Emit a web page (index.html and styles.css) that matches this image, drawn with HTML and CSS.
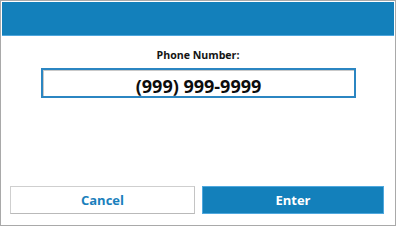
FILE: index.html
```html
<!DOCTYPE html>
<html>
<head>
<meta charset="utf-8">
<link rel="stylesheet" href="styles.css">
</head>
<body>
<div class="frame">
  <div class="header"></div>
  <div class="content">
    <div class="label">Phone Number:</div>
    <div class="field"><span class="value">(999) 999-9999</span></div>
  </div>
  <div class="actions">
    <button class="btn cancel">Cancel</button>
    <button class="btn enter">Enter</button>
  </div>
</div>
</body>
</html>
```

FILE: styles.css
```css
html, body {
  margin: 0;
  padding: 0;
  background: #ffffff;
}
body {
  width: 397px;
  height: 227px;
  font-family: "Open Sans", "Liberation Sans", sans-serif;
}
.frame {
  box-sizing: border-box;
  width: 396px;
  height: 226px;
  border: 1px solid #a9a9a9;
  padding: 1px;
  display: flex;
  flex-direction: column;
  background: #ffffff;
}
.header {
  height: 33px;
  background: #1380bb;
  border-bottom: 1px solid #4fa6dc;
}
.content {
  display: flex;
  flex-direction: column;
  align-items: center;
}
.label {
  margin-top: 12px;
  font-size: 10.6px;
  line-height: 14px;
  font-weight: 700;
  color: #141414;
}
.field {
  box-sizing: border-box;
  margin-top: 6px;
  margin-left: 1px;
  width: 315px;
  height: 30px;
  border: 2px solid #2b86c2;
  box-shadow: inset 1px 1px 0 #c9c9c9;
  padding-top: 6px;
  display: flex;
  justify-content: center;
}
.value {
  font-size: 18px;
  line-height: 20px;
  font-weight: 700;
  color: #0d0d0d;
}
.actions {
  margin-top: auto;
  margin-bottom: 10px;
  padding-left: 8px;
  display: flex;
  gap: 7px;
}
.btn {
  box-sizing: border-box;
  height: 28px;
  font-family: "Open Sans", "Liberation Sans", sans-serif;
  font-size: 13px;
  font-weight: 700;
  padding: 0;
  margin: 0;
  cursor: pointer;
}
.cancel {
  width: 185px;
  background: #ffffff;
  color: #1a80bc;
  border: 1px solid #cfcfcf;
  border-bottom-color: #b9b9b9;
  border-right-color: #c4c4c4;
}
.enter {
  width: 182px;
  background: #1380bb;
  color: #ffffff;
  border: 1px solid #4fa8de;
}
```
